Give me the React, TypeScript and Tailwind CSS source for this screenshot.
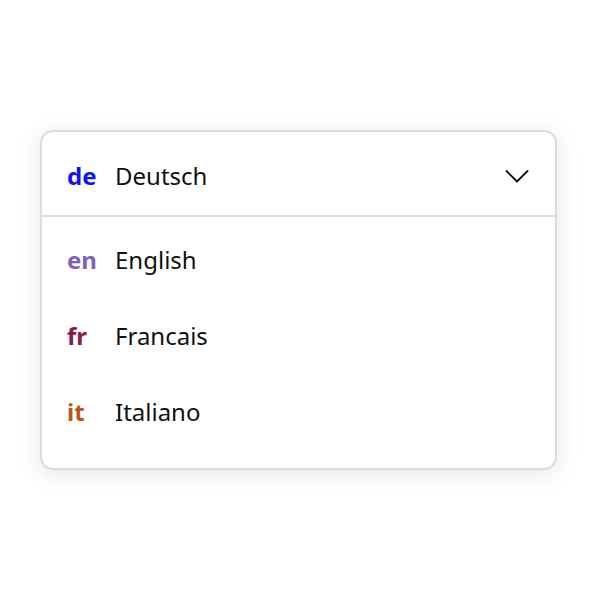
const languages = [
  { code: 'en', name: 'English', color: 'text-[#7f5fc0]' },
  { code: 'fr', name: 'Francais', color: 'text-[#8b1a45]' },
  { code: 'it', name: 'Italiano', color: 'text-[#b8581a]' },
];

export default function App() {
  return (
    <div className="flex h-[600px] w-[600px] items-start bg-white pl-[40px] pt-[130px] font-['Noto_Sans',sans-serif]">
      <div className="w-[517px] overflow-hidden rounded-[13px] border-2 border-[#dcdcdc] bg-white shadow-[0_4px_24px_rgba(0,0,0,0.10)]">
        {/* selected */}
        <div className="flex h-[85px] items-center border-b-2 border-[#dcdcdc] pl-[25px] pr-[26px] pt-1">
          <span className="w-12 text-[24px] font-bold text-[#1010ff]">de</span>
          <span className="text-[24px] text-[#111]">Deutsch</span>
          <svg className="ml-auto h-6 w-6" viewBox="0 0 24 24" fill="none" stroke="#111" strokeWidth={1.8} strokeLinecap="round" strokeLinejoin="round">
            <path d="M1.5 7l10.5 10.5L22.5 7" />
          </svg>
        </div>

        {/* options */}
        <ul className="pt-[5px] pb-[18px]">
          {languages.map((lang) => (
            <li key={lang.code} className="flex h-[76px] items-center pl-[25px]">
              <span className={`w-12 text-[24px] font-bold ${lang.color}`}>{lang.code}</span>
              <span className="text-[24px] text-[#111]">{lang.name}</span>
            </li>
          ))}
        </ul>
      </div>
    </div>
  );
}
